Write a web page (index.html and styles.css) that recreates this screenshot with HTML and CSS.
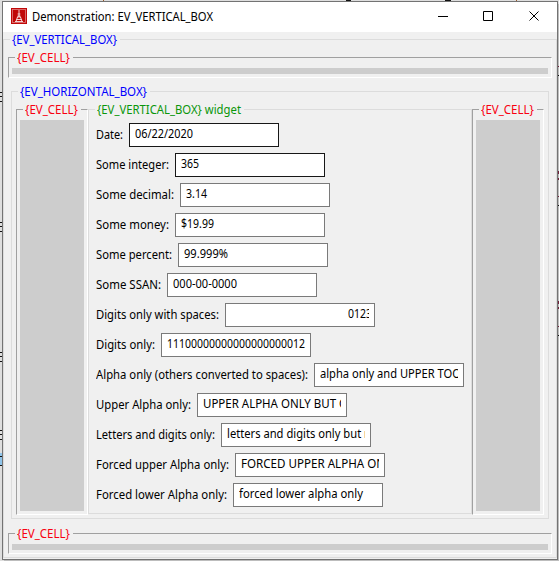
FILE: index.html
```html
<!DOCTYPE html>
<html lang="en">
<head>
<meta charset="utf-8">
<title>Demonstration: EV_VERTICAL_BOX</title>
<link rel="stylesheet" href="styles.css">
</head>
<body>
<svg class="desktop" width="559" height="561" viewBox="0 0 559 561" shape-rendering="crispEdges">
  <path fill="#bdbdbd" d="M558 4h1v557H4v-1h554z"/>
  <path fill="#8fc4ea" d="M0 453h2v12H0z"/>
  <path fill="#111" d="M0 92h2v1H0zM0 96h2v1H0zM0 101h2v1H0zM0 222h2v1H0zM0 226h2v1H0zM0 231h2v1H0zM0 352h2v1H0zM0 356h2v1H0zM0 361h2v1H0zM0 430h2v1H0zM0 434h2v1H0zM0 439h2v1H0zM0 456h2v1H0zM0 465h2v1H0zM558 75h1v1h-1zM558 205h1v1h-1zM558 335h1v1h-1zM346 0h5v1h-5zM445 0h6v1h-6z"/>
  <path fill="#70203a" d="M558 66h1v1h-1zM558 171h1v3h-1zM558 178h1v2h-1zM558 196h1v1h-1zM558 301h1v3h-1zM558 307h1v2h-1zM558 326h1v1h-1z"/>
  <path fill="#9a5a2a" d="M103 0h1v1h-1zM516 0h1v1h-1z"/>
</svg>
<main class="window">
  <header class="titlebar">
    <svg class="app-icon" width="16" height="16" viewBox="0 0 16 16"><rect width="16" height="16" fill="#c00808"/><rect x="1.500" y="1.500" width="13" height="13" fill="none" stroke="#e08080" stroke-width=".8"/><path d="M8 2v3M7.300 5v4M8.700 5v4M6.500 9L5 13.500M9.500 9L11 13.500M6 9h4M5.500 11.500h5M4 13.500h8" stroke="#fff" stroke-width=".8" fill="none"/></svg>
    <h1><span data-width="181">Demonstration: EV_VERTICAL_BOX</span></h1>
    <svg class="controls" width="102" height="12" viewBox="0 0 102 12" fill="none" stroke="#000"><path d="M0 6.500h10M45.500 1.500h9v9h-9zM91.500 1.500l9 9M100.500 1.500l-9 9"/></svg>
  </header>
  <section class="group outer">
    <h2 class="blue"><span data-width="105">{EV_VERTICAL_BOX}</span></h2>
    <section class="group cell wide"><h2 class="red"><span data-width="53">{EV_CELL}</span></h2><div class="fill"></div></section>
    <section class="group horizontal">
      <h2 class="blue"><span data-width="127">{EV_HORIZONTAL_BOX}</span></h2>
      <section class="group cell side"><h2 class="red"><span data-width="53">{EV_CELL}</span></h2><div class="fill"></div></section>
      <section class="group form">
        <h2 class="green"><span data-width="144">{EV_VERTICAL_BOX} widget</span></h2>
        <div class="row"><label><span data-width="27">Date:</span></label><div class="field active"><span data-width="58">06/22/2020</span></div></div>
        <div class="row"><label><span data-width="73">Some integer:</span></label><div class="field active"><span data-width="18">365</span></div></div>
        <div class="row"><label><span data-width="78">Some decimal:</span></label><div class="field"><span data-width="21">3.14</span></div></div>
        <div class="row"><label><span data-width="73">Some money:</span></label><div class="field"><span data-width="33">$19.99</span></div></div>
        <div class="row"><label><span data-width="76">Some percent:</span></label><div class="field"><span data-width="44">99.999%</span></div></div>
        <div class="row"><label><span data-width="65">Some SSAN:</span></label><div class="field"><span data-width="64">000-00-0000</span></div></div>
        <div class="row"><label><span data-width="123">Digits only with spaces:</span></label><div class="field spaced"><span data-width="24">0123</span></div></div>
        <div class="row"><label><span data-width="59">Digits only:</span></label><div class="field"><span data-width="138">11100000000000000000012</span></div></div>
        <div class="row"><label><span data-width="212">Alpha only (others converted to spaces):</span></label><div class="field"><span data-width="141">alpha only and UPPER TOO</span></div></div>
        <div class="row"><label><span data-width="95">Upper Alpha only:</span></label><div class="field"><span data-width="145">UPPER ALPHA ONLY BUT O</span></div></div>
        <div class="row"><label><span data-width="119">Letters and digits only:</span></label><div class="field"><span data-width="144">letters and digits only but n</span></div></div>
        <div class="row"><label><span data-width="133">Forced upper Alpha only:</span></label><div class="field"><span data-width="144">FORCED UPPER ALPHA ON</span></div></div>
        <div class="row"><label><span data-width="131">Forced lower Alpha only:</span></label><div class="field"><span data-width="124">forced lower alpha only</span></div></div>
      </section>
      <section class="group cell side"><h2 class="red"><span data-width="53">{EV_CELL}</span></h2><div class="fill"></div></section>
    </section>
    <section class="group cell wide"><h2 class="red"><span data-width="53">{EV_CELL}</span></h2><div class="fill"></div></section>
  </section>
</main>
<script src="fit.js"></script>
</body>
</html>
```
FILE: styles.css
```css
* { box-sizing: border-box; }
body { margin: 0; width: 559px; height: 561px; padding: 1px 1px 1px 2px; overflow: hidden; background: #dedede; font: 12px/16px "Noto Sans", "Open Sans", sans-serif; color: #000; }
h1, h2 { margin: 0; font-size: 12px; font-weight: 400; white-space: nowrap; }
[data-width] { display: inline-block; white-space: pre; transform-origin: 0 50%; vertical-align: top; }
.desktop { position: absolute; top: 0; left: 0; }
.window { position: relative; width: 556px; height: 559px; border: 1px solid #737373; background: #f0f0f0; }
.titlebar { display: flex; align-items: flex-start; height: 30px; padding: 6px 17px 0 8px; background: #fff; }
.titlebar h1 { margin: 1px 0 0 5px; }
.controls { margin: 2px 0 0 auto; }
.group { position: relative; border: 1px solid #dcdcdc; }
.group > h2 { position: absolute; top: -8px; left: 6px; height: 16px; padding: 0 3px 0 2px; background: #f0f0f0; line-height: 16px; }
.outer { height: 519px; margin-top: 7px; padding: 17px 4px 3px 4px; }
.cell { border-color: #a0a0a0 #fff #fff #a0a0a0; }
.wide { height: 21px; padding: 10px 3px 3px; }
.group.wide > h2 { height: 13px; }
.fill { height: 100%; background: #cdcdcd; }
.horizontal { display: flex; height: 428px; margin: 13px 3px 14px; padding: 17px 4px 3px; }
.side { width: 72px; height: 406px; padding: 10px 3px 3px; }
.form { width: 384px; height: 405px; padding: 13px 0 0 7px; }
.row { display: flex; height: 24px; margin-bottom: 6px; }
.row label { margin: 4px 6px 0 0; height: 16px; }
.field { width: 150px; height: 24px; flex: none; padding: 2px 5px; border: 1px solid #7a7a7a; background: #fff; overflow: clip; overflow-clip-margin: content-box; white-space: nowrap; }
.active { border-color: #171717; }
.spaced { padding-left: 122px; }
.blue { color: #00f; }
.red { color: #f80010; }
.green { color: #0a960a; }
```
FILE: fit.js
```js
// Condense each label to its native dialog width.
document.querySelectorAll("[data-width]").forEach((label) => {
  const width = Number(label.dataset.width);
  const natural = label.getBoundingClientRect().width;
  label.style.width = width + "px";
  label.style.transform = "scaleX(" + width / natural + ")";
});
```
